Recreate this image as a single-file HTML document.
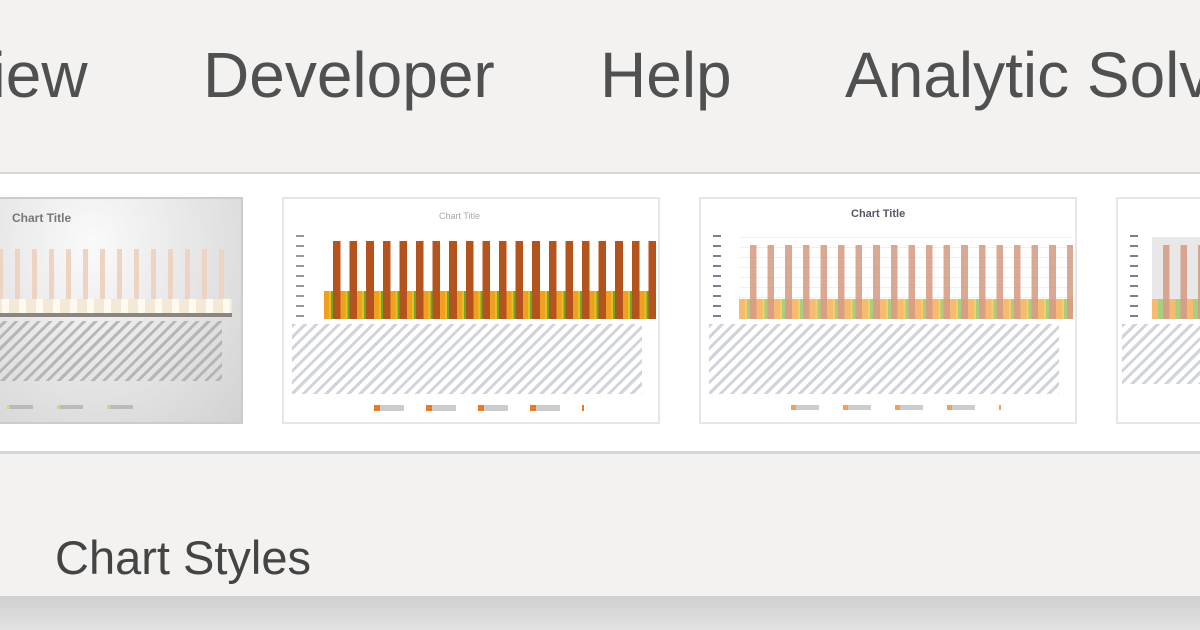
<!DOCTYPE html>
<html><head><meta charset="utf-8"><style>
*{margin:0;padding:0;box-sizing:border-box}
body{width:1200px;height:630px;overflow:hidden;background:#f3f2f1;position:relative;font-family:"Liberation Sans",sans-serif}
.t{position:absolute;top:38px;font-size:64px;color:#505050;white-space:nowrap}
.band{position:absolute;left:0;top:172px;width:1200px;height:282px;background:#fff;border-top:2px solid #d6d6d6;border-bottom:3px solid #d6d6d6}
.th{position:absolute;top:197px;height:227px;border:2px solid #e6e6e6;background:#fff;overflow:hidden}
.a{position:absolute}
.lbl{position:absolute;background:repeating-linear-gradient(135deg,#c4c8d0 0 3px,transparent 3px 8px);opacity:.8}
.cs{position:absolute;left:55px;top:530px;font-size:47px;color:#444}
.foot{position:absolute;left:0;top:596px;width:1200px;height:34px;background:linear-gradient(#cfcfcf,#e2e2e2)}
</style></head><body>
<div class="t" style="left:-50px">View</div>
<div class="t" style="left:203px">Developer</div>
<div class="t" style="left:600px">Help</div>
<div class="t" style="left:845px">Analytic Solver</div>
<div class="band"></div>

<!-- thumb 1 -->
<div class="th" style="left:-10px;width:253px;background:radial-gradient(ellipse at 40% 20%,#fafafa,#d2d2d2);border-color:#ccc">
 <div class="a" style="left:20px;top:12px;font-size:12px;color:#777;font-weight:bold">Chart Title</div>
 <div class="a" style="left:0;top:50px;width:240px;height:62px;background:repeating-linear-gradient(90deg,transparent 0 6px,#ecd3c2 6px 11px,transparent 11px 17px)"></div>
 <div class="a" style="left:0;top:100px;width:240px;height:14px;background:repeating-linear-gradient(90deg,#f4e8d6 0 10px,#fffaf0 10px 17px)"></div>
 <div class="a" style="left:0;top:114px;width:240px;height:4px;background:#8a8683"></div>
 <div class="lbl" style="left:0;top:122px;width:230px;height:60px;background:repeating-linear-gradient(135deg,#aaa 0 3px,transparent 3px 8px)"></div>
 <div class="a" style="left:15px;top:206px;width:150px;height:4px;background:repeating-linear-gradient(90deg,#e6c65a 0 3px,#aaa 3px 26px,transparent 26px 50px);opacity:.7"></div>
</div>

<!-- thumb 2 -->
<div class="th" style="left:282px;width:378px">
 <div class="a" style="left:155px;top:12px;font-size:9px;color:#aaa">Chart Title</div>
 <div class="a" style="left:12px;top:36px;width:8px;height:86px;background:repeating-linear-gradient(#999 0 2px,transparent 2px 10px)"></div>
 <div class="a" style="left:40px;top:92px;width:332px;height:28px;background:repeating-linear-gradient(90deg,#f0a020 0 5px,#e8c020 5px 7px,#6aa830 7px 10px,transparent 10px 16.6px)"></div>
 <div class="a" style="left:40px;top:42px;width:332px;height:78px;background:repeating-linear-gradient(90deg,transparent 0 9px,#b5531e 9px 16.6px)"></div>
 <div class="lbl" style="left:8px;top:125px;width:350px;height:70px"></div>
 <div class="a" style="left:90px;top:206px;width:210px;height:6px;background:repeating-linear-gradient(90deg,#ea7a22 0 6px,#ccc 6px 30px,transparent 30px 52px)"></div>
</div>

<!-- thumb 3 -->
<div class="th" style="left:699px;width:378px">
 <div class="a" style="left:150px;top:9px;font-size:11px;color:#556;font-weight:bold">Chart Title</div>
 <div class="a" style="left:12px;top:36px;width:8px;height:86px;background:repeating-linear-gradient(#7a8090 0 2px,transparent 2px 10px)"></div>
 <div class="a" style="left:38px;top:38px;width:334px;height:82px;background:repeating-linear-gradient(#eef0f3 0 1px,transparent 1px 10px)"></div>
 <div class="a" style="left:38px;top:100px;width:334px;height:20px;background:repeating-linear-gradient(90deg,#f6bb70 0 6px,#f4cf6a 6px 8px,#a8cf80 8px 11px,#f6c8a0 11px 17.6px)"></div>
 <div class="a" style="left:38px;top:46px;width:334px;height:74px;background:repeating-linear-gradient(90deg,transparent 0 11px,#d49880 11px 17.6px);opacity:.85"></div>
 <div class="lbl" style="left:8px;top:125px;width:350px;height:70px"></div>
 <div class="a" style="left:90px;top:206px;width:210px;height:5px;background:repeating-linear-gradient(90deg,#f3a050 0 5px,#ccc 5px 28px,transparent 28px 52px)"></div>
</div>

<!-- thumb 4 -->
<div class="th" style="left:1116px;width:100px">
 <div class="a" style="left:12px;top:36px;width:8px;height:86px;background:repeating-linear-gradient(#7a8090 0 2px,transparent 2px 10px)"></div>
 <div class="a" style="left:34px;top:38px;width:70px;height:82px;background:#e8e8e8"></div>
 <div class="a" style="left:34px;top:100px;width:70px;height:20px;background:repeating-linear-gradient(90deg,#f6bb70 0 6px,#a8cf80 6px 11px,#e0c0a8 11px 17.6px)"></div>
 <div class="a" style="left:34px;top:46px;width:70px;height:74px;background:repeating-linear-gradient(90deg,transparent 0 11px,#d49880 11px 17.6px);opacity:.85"></div>
 <div class="lbl" style="left:4px;top:125px;width:96px;height:60px"></div>
</div>

<div class="cs">Chart Styles</div>
<div class="foot"></div>
</body></html>
